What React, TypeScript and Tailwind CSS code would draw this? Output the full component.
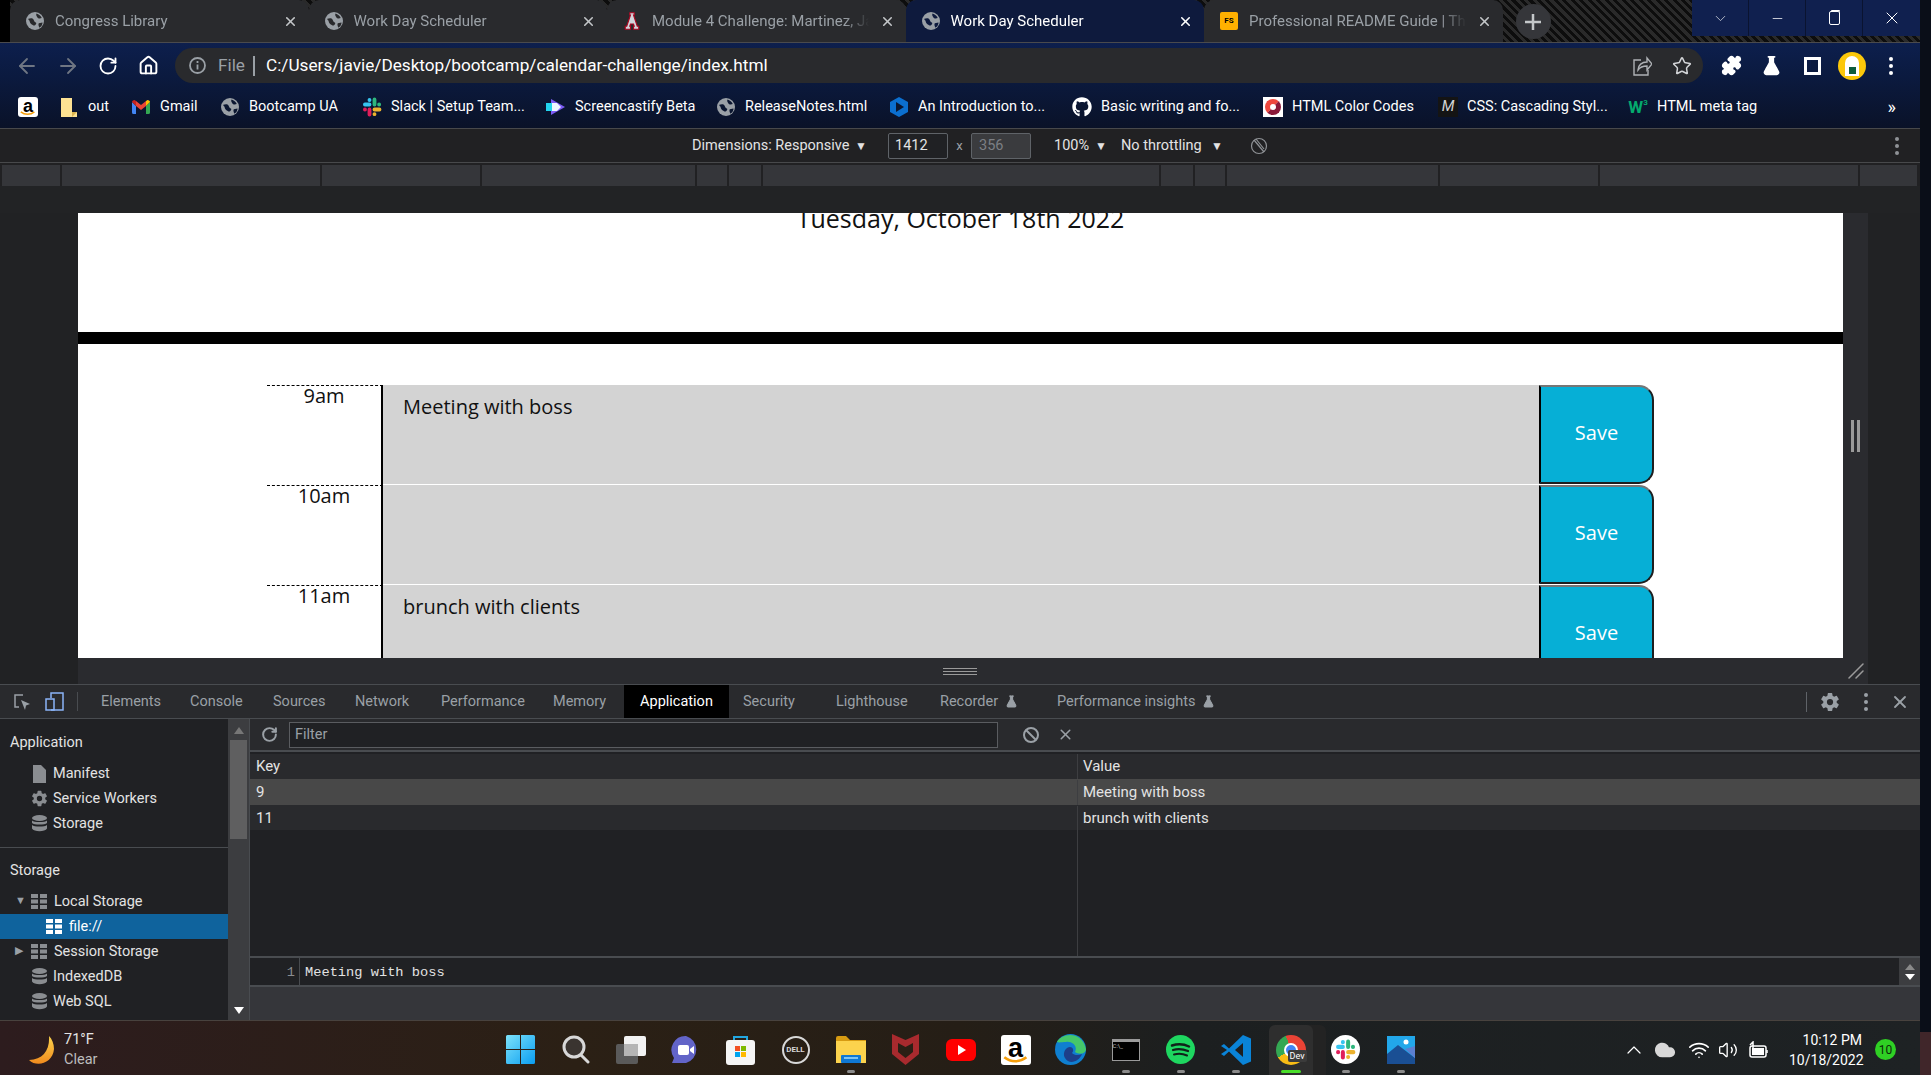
import { ArrowLeft, ArrowRight, ChevronDown, ChevronUp, Cloud, FlaskConical, House, Minus, Puzzle, RotateCw, Star, Volume2, Wifi, X } from "lucide-react";
import { FaGithub } from "react-icons/fa";
import { IoSettingsSharp } from "react-icons/io5";

function Globe({ cut = "#292a2d", size = 18 }: { cut?: string; size?: number }) {
  return (
    <svg width={size} height={size} viewBox="0 0 24 24" className="shrink-0">
      <circle cx="12" cy="12" r="12" fill="#9aa0a6" />
      <path d="M3 9c3-1 6-1 7 1s1 3 3 4-1 5-3 4-5-3-5-5-2-2-2-4z" fill={cut} />
      <path d="M14 2c3 1 6 3 7 6-2 1-5 1-6-1s-2-3-1-5z" fill={cut} />
      <path d="M17 15l5-1c0 2-1 5-4 7-1-2-2-4-1-6z" fill={cut} />
    </svg>
  );
}

function AmazonTile({ size = 20 }: { size?: number }) {
  return (
    <div
      className="relative flex shrink-0 items-start justify-center rounded-[3px] bg-white font-['Liberation_Sans',sans-serif] font-bold leading-none text-black"
      style={{ width: size, height: size, fontSize: size * 0.9 }}
    >
      a
      <svg viewBox="0 0 20 6" className="absolute bottom-[1px] left-[2px] right-[2px]">
        <path d="M1 1c5 4 12 4 17 0" stroke="#f59e0b" strokeWidth="2" fill="none" />
      </svg>
    </div>
  );
}

function SlackGlyph({ size = 20 }: { size?: number }) {
  return (
    <svg width={size} height={size} viewBox="0 0 24 24" fill="none" strokeWidth="4.6" strokeLinecap="round" className="shrink-0">
      <path d="M9 3.5v.1M3.5 9H9" stroke="#36c5f0" />
      <path d="M15 3v6M20.5 9h.1" stroke="#2eb67d" />
      <path d="M21 15h-6M15 20.5v.1" stroke="#ecb22e" />
      <path d="M9 21v-6M3.5 15h.1" stroke="#e01e5a" />
    </svg>
  );
}

const ruler = ["w-[58px]", "w-[258px]", "w-[158px]", "w-[213px]", "w-[30px]", "w-[32px]", "w-[396px]", "w-[32px]", "w-[30px]", "w-[211px]", "w-[158px]", "w-[258px]", "w-[57px]"];

const tabs = [
  { title: "Congress Library", icon: <Globe /> },
  { title: "Work Day Scheduler", icon: <Globe /> },
  {
    title: "Module 4 Challenge: Martinez, Ja",
    icon: (
      <svg width="18" height="18" viewBox="0 0 24 24" className="shrink-0">
        <path d="M9 1h6v3h-1l5 15h2v4h-7v-4h1l-1-3H10l-1 3h1v4H3v-4h2L10 4H9z" fill="#d1d5db" stroke="#ab0520" strokeWidth="1.5" />
      </svg>
    ),
  },
  { title: "Work Day Scheduler", icon: <Globe cut="#0e1a3d" />, active: true },
  {
    title: "Professional README Guide | The",
    icon: (
      <div className="flex h-[18px] w-[18px] shrink-0 items-center justify-center rounded-[2px] bg-[#ffb000] text-[8px] font-bold leading-none text-black">
        FS
      </div>
    ),
  },
];

const bookmarks = [
  { label: "", width: "w-[41px]", icon: <AmazonTile /> },
  {
    label: "out",
    width: "w-[72px]",
    icon: (
      <svg width="16" height="20" viewBox="0 0 16 20">
        <path d="M0 1h11v14h5v5H0z" fill="#fde293" />
        <path d="M11 15h5l-5 5z" fill="#d9b34f" />
      </svg>
    ),
  },
  {
    label: "Gmail",
    width: "w-[89px]",
    icon: (
      <svg width="18" height="14" viewBox="0 0 18 14">
        <path d="M0 2v10.5A1.5 1.5 0 0 0 1.5 14H4V6z" fill="#4285f4" />
        <path d="M18 2v10.5a1.5 1.5 0 0 1-1.5 1.5H14V6z" fill="#34a853" />
        <path d="M0 2l4 4V1L2.5 0C1 0 0 1 0 2z" fill="#c5221f" />
        <path d="M4 1v5l5 4 5-4V1L9 5z" fill="#ea4335" />
        <path d="M14 1v5l4-4c0-1-1-2-2.5-2z" fill="#fbbc04" />
      </svg>
    ),
  },
  { label: "Bootcamp UA", width: "w-[142px]", icon: <Globe cut="#0b1630" /> },
  { label: "Slack | Setup Team...", width: "w-[184px]", icon: <SlackGlyph /> },
  {
    label: "Screencastify Beta",
    width: "w-[170px]",
    icon: (
      <svg width="20" height="20" viewBox="0 0 20 20">
        <path d="M5 2l14 8-14 8z" fill="#7c5cf5" />
        <rect x="0" y="6" width="6" height="8" fill="#22d3ee" />
        <path d="M6 6h5l4 4-4 4H6z" fill="#eff6ff" />
      </svg>
    ),
  },
  { label: "ReleaseNotes.html", width: "w-[173px]", icon: <Globe cut="#0b1630" /> },
  {
    label: "An Introduction to...",
    width: "w-[183px]",
    icon: (
      <svg width="18" height="20" viewBox="0 0 18 20">
        <path d="M9 0l9 5v10l-9 5-9-5V5z" fill="#0b6fd0" />
        <path d="M6 5l8 5-8 5z" fill="#0b1630" />
      </svg>
    ),
  },
  { label: "Basic writing and fo...", width: "w-[191px]", icon: <FaGithub className="text-[20px] text-white" /> },
  {
    label: "HTML Color Codes",
    width: "w-[175px]",
    icon: (
      <div className="flex h-5 w-5 items-center justify-center bg-white">
        <div className="h-4 w-4 rounded-full border-[5px] border-[#f0483e] border-b-[#8b1a3a] border-r-[#8b1a3a] bg-white" />
      </div>
    ),
  },
  {
    label: "CSS: Cascading Styl...",
    width: "w-[190px]",
    icon: <div className="flex h-5 w-5 items-center justify-center bg-[#141414] text-[15px] italic leading-none text-[#d4d4d4]">M</div>,
  },
  {
    label: "HTML meta tag",
    width: "w-[140px]",
    icon: (
      <div className="flex h-5 w-5 items-start justify-center text-[17px] font-bold leading-[20px] text-[#04aa6d]">
        W<span className="text-[8px] leading-[12px]">3</span>
      </div>
    ),
  },
];

const devtoolsTabs = [
  { name: "Elements", width: "w-[89px]" },
  { name: "Console", width: "w-[83px]" },
  { name: "Sources", width: "w-[82px]" },
  { name: "Network", width: "w-[86px]" },
  { name: "Performance", width: "w-[112px]" },
  { name: "Memory", width: "w-[71px]" },
];

function FlaskMark() {
  return <FlaskConical size={13} className="fill-[#9aa0a6] text-[#9aa0a6]" />;
}

function DbIcon() {
  return (
    <svg width="15" height="17" viewBox="0 0 15 17" className="shrink-0">
      <ellipse cx="7.5" cy="3" rx="7.5" ry="3" fill="#8a8d91" />
      <path d="M0 5.5c2 2 13 2 15 0V8c-2 2-13 2-15 0zM0 10c2 2 13 2 15 0v3.5c-2 3.5-13 3.5-15 0z" fill="#8a8d91" />
    </svg>
  );
}

function GridIcon({ color = "#8a8d91" }: { color?: string }) {
  return (
    <svg width="16" height="15" viewBox="0 0 16 15" className="shrink-0" fill={color}>
      <rect x="0" y="0" width="7" height="4" />
      <rect x="9" y="0" width="7" height="4" />
      <rect x="0" y="5.5" width="7" height="4" />
      <rect x="9" y="5.5" width="7" height="4" />
      <rect x="0" y="11" width="7" height="4" />
      <rect x="9" y="11" width="7" height="4" />
    </svg>
  );
}

function SideRow({ icon, label }: { icon: React.ReactNode; label: string }) {
  return (
    <div className="flex h-[25px] items-center pl-[26px]">
      <div className="flex w-[27px] shrink-0 justify-center">{icon}</div>
      <span>{label}</span>
    </div>
  );
}

function TreeRow({ arrow, label }: { arrow: string; label: string }) {
  return (
    <div className="flex h-[25px] items-center pl-[15px]">
      <span className="w-[15px] text-[11px] text-[#9aa0a6]">{arrow}</span>
      <div className="mr-[6px] flex w-[18px] shrink-0 justify-center">
        <GridIcon />
      </div>
      <span>{label}</span>
    </div>
  );
}

function Kebab({ color = "bg-white" }: { color?: string }) {
  return (
    <div className="flex flex-col gap-[3px]">
      <div className={`h-1 w-1 rounded-full ${color}`} />
      <div className={`h-1 w-1 rounded-full ${color}`} />
      <div className={`h-1 w-1 rounded-full ${color}`} />
    </div>
  );
}

function Corner() {
  return (
    <svg width="16" height="16" viewBox="0 0 16 16" stroke="#9a9a9a" strokeWidth="1.5" strokeLinecap="round">
      <path d="M1 15L15 1M8 15l7-7" />
    </svg>
  );
}

const hours = [
  { label: "9am", text: "Meeting with boss" },
  { label: "10am", text: "" },
  { label: "11am", text: "brunch with clients" },
];

const dock = [
  {
    key: "start",
    icon: (
      <svg width="29" height="29" viewBox="0 0 29 29">
        <defs>
          <linearGradient id="win" x1="0" y1="0" x2="1" y2="1">
            <stop offset="0" stopColor="#7de3fb" />
            <stop offset="1" stopColor="#0a9df0" />
          </linearGradient>
        </defs>
        <path d="M0 1.5A1.5 1.5 0 0 1 1.5 0H14v14H0zM15 0h12.5A1.5 1.5 0 0 1 29 1.5V14H15zM0 15h14v14H1.5A1.5 1.5 0 0 1 0 27.5zM15 15h14v12.5a1.5 1.5 0 0 1-1.5 1.5H15z" fill="url(#win)" />
      </svg>
    ),
  },
  {
    key: "search",
    icon: (
      <svg width="28" height="29" viewBox="0 0 28 29" fill="none">
        <circle cx="12" cy="12" r="10" fill="#3a3430" stroke="#d8d8d8" strokeWidth="3" />
        <path d="M19 20l7 7" stroke="#d8d8d8" strokeWidth="3" strokeLinecap="round" />
      </svg>
    ),
  },
  {
    key: "tasks",
    icon: (
      <svg width="30" height="28" viewBox="0 0 30 28">
        <rect x="0" y="8" width="22" height="20" rx="2" fill="#5a5a5a" />
        <rect x="8" y="0" width="22" height="20" rx="2" fill="#f2f2f2" />
        <rect x="8" y="8" width="14" height="12" fill="#b5b5b5" />
      </svg>
    ),
  },
  {
    key: "chat",
    icon: (
      <svg width="29" height="29" viewBox="0 0 29 29">
        <path d="M15 1a14 14 0 0 1 0 27H1l2-5A14 14 0 0 1 15 1z" fill="#6264c8" />
        <rect x="7" y="10" width="11" height="10" rx="2" fill="#fff" />
        <path d="M19 14l4-3v8l-4-3z" fill="#fff" />
      </svg>
    ),
  },
  {
    key: "store",
    icon: (
      <svg width="29" height="30" viewBox="0 0 29 30">
        <path d="M8 6V2h13v4" stroke="#22a7e0" strokeWidth="2" fill="none" />
        <rect x="0" y="5" width="29" height="25" rx="3" fill="#f5f5f5" />
        <rect x="9" y="11" width="5" height="5" fill="#f25022" />
        <rect x="15" y="11" width="5" height="5" fill="#7fba00" />
        <rect x="9" y="17" width="5" height="5" fill="#00a4ef" />
        <rect x="15" y="17" width="5" height="5" fill="#ffb900" />
      </svg>
    ),
  },
  {
    key: "dell",
    icon: (
      <div className="flex h-7 w-7 items-center justify-center rounded-full border-2 border-[#d8d8d8] text-[8px] font-bold leading-none text-[#d8d8d8]">
        DELL
      </div>
    ),
  },
  {
    key: "files",
    dot: true,
    icon: (
      <svg width="30" height="27" viewBox="0 0 30 27">
        <path d="M0 2a2 2 0 0 1 2-2h8l4 4h16v4H0z" fill="#d79b12" />
        <rect x="0" y="5" width="30" height="22" fill="#fcd34d" />
        <rect x="5" y="19" width="20" height="8" rx="1" fill="#0f78d4" />
        <rect x="8" y="21" width="14" height="2" fill="#7cc4f5" />
      </svg>
    ),
  },
  {
    key: "mcafee",
    icon: (
      <svg width="27" height="31" viewBox="0 0 27 31">
        <path d="M0 0l13.5 6L27 0v20L13.5 31 0 20z" fill="#a82a2e" />
        <path d="M6 9l7.5 4L21 9v9l-7.5 6L6 18z" fill="#2a1f15" />
      </svg>
    ),
  },
  {
    key: "youtube",
    icon: (
      <svg width="30" height="22" viewBox="0 0 30 22">
        <rect width="30" height="22" rx="6" fill="#ff0000" />
        <path d="M12 6l8 5-8 5z" fill="#fff" />
      </svg>
    ),
  },
  { key: "amazon", icon: <AmazonTile size={30} /> },
  {
    key: "edge",
    icon: (
      <svg width="31" height="31" viewBox="0 0 31 31">
        <circle cx="15.5" cy="15.5" r="15.5" fill="#0f7fd0" />
        <path d="M2 8C6-1 27-4 31 15c0 5-7 6-11 3 3-6-3-11-9-10-4 0-7 1-9 0z" fill="#45c76a" />
        <path d="M12 14c5-3 8 2 5 5 3 3 7 2 10 1-3 8-13 11-17 4-2-3-1-8 2-10z" fill="#1d3f8a" />
      </svg>
    ),
  },
  {
    key: "terminal",
    dot: true,
    icon: <div className="h-[22px] w-7 border border-t-[3px] border-[#9a9a9a] bg-black text-[6px] leading-[8px] text-[#c8c8c8]">C:\_</div>,
  },
  {
    key: "spotify",
    dot: true,
    icon: (
      <svg width="29" height="29" viewBox="0 0 29 29" fill="none" stroke="#10231a" strokeLinecap="round">
        <circle cx="14.5" cy="14.5" r="14.5" fill="#1ed760" stroke="none" />
        <path d="M6 10.5c6-2 12-1.5 17 1" strokeWidth="2.5" />
        <path d="M7 15c5-1.5 10-1 15 1" strokeWidth="2.2" />
        <path d="M8 19.5c4-1 9-.8 13 1" strokeWidth="2" />
      </svg>
    ),
  },
  {
    key: "vscode",
    dot: true,
    icon: (
      <svg width="30" height="30" viewBox="0 0 30 30">
        <path d="M22 0l8 3.5v23L22 30 8 16.5 3 21l-3-2 6-4-6-4 3-2 5 4.5z" fill="#0a84d8" />
        <path d="M22 8l-8 7 8 7z" fill="#1f1f1f" />
      </svg>
    ),
  },
  {
    key: "chrome",
    active: true,
    icon: (
      <div className="relative h-[30px] w-[30px]">
        <div className="h-[30px] w-[30px] rounded-full bg-[conic-gradient(#ea4335_0deg_130deg,#f9bc15_130deg_240deg,#34a853_240deg_340deg,#ea4335_340deg)]">
          <div className="relative left-[8px] top-[8px] h-[14px] w-[14px] rounded-full border-2 border-white bg-[#4285f4]" />
        </div>
        <div className="absolute -right-[1px] bottom-[3px] rounded-[2px] bg-[#3b3b3b] px-[2px] text-[9px] leading-[12px] text-white">Dev</div>
      </div>
    ),
  },
  {
    key: "slack",
    dot: true,
    icon: (
      <div className="flex h-[29px] w-[29px] items-center justify-center rounded-full bg-white">
        <SlackGlyph size={21} />
      </div>
    ),
  },
  {
    key: "photos",
    dot: true,
    icon: (
      <svg width="28" height="28" viewBox="0 0 28 28">
        <rect width="28" height="28" fill="#22a7ea" />
        <circle cx="19" cy="6" r="2.5" fill="#fff" />
        <path d="M0 28V18l11-9 17 13v6z" fill="#1a4f94" />
        <path d="M18 13l10-3v12z" fill="#5b7fd0" />
      </svg>
    ),
  },
];

export default function App() {
  return (
    <div className="flex h-[1075px] w-[1931px] overflow-hidden bg-[#0a0e18] font-['Roboto',sans-serif] text-[14.5px] text-[#e8eaed]">
      <div className="flex w-[1920px] shrink-0 flex-col">
        {/* tab strip */}
        <div className="flex h-[42px] bg-[#1c1c1c] bg-[repeating-linear-gradient(45deg,#0d0d0d_0px,#0d0d0d_3px,#2a2a2a_3px,#2a2a2a_6px)]">
          <div className="w-[10px] bg-black" />
          {tabs.map((tab, i) => (
            <div
              key={i}
              className={`flex h-[42px] w-[298.5px] shrink-0 items-center rounded-t-[10px] pl-[16px] pr-[11px] text-[15px] ${tab.active ? "bg-[#0e1a3d] text-white" : "bg-[#292a2d] text-[#9aa0a6]"}`}
            >
              {tab.icon}
              <span className="ml-[11px] min-w-0 flex-1 overflow-hidden whitespace-nowrap [mask-image:linear-gradient(90deg,#000_86%,transparent_97%)]">{tab.title}</span>
              <X size={15} strokeWidth={2.5} className={`ml-1 shrink-0 ${tab.active ? "text-white" : "text-[#c4c7c9]"}`} />
            </div>
          ))}
          <div className="ml-[13px] mt-[4px] flex h-[35px] w-[35px] items-center justify-center rounded-full bg-[#35363a]">
            <svg width="18" height="18" viewBox="0 0 18 18" stroke="#c4c7c9" strokeWidth="2.5">
              <path d="M9 1v16M1 9h16" />
            </svg>
          </div>
          <div className="ml-auto flex h-[36px]">
            <div className="flex w-[57px] items-center justify-center border-r border-[#0a1330] bg-[#10204f]">
              <ChevronDown size={17} strokeWidth={1.2} className="text-[#c8ccd8]" />
            </div>
            <div className="flex w-[57px] items-center justify-center border-r border-[#0a1330] bg-[#10204f]">
              <Minus size={15} strokeWidth={1.2} className="text-white" />
            </div>
            <div className="flex w-[57px] items-center justify-center border-r border-[#0a1330] bg-[#10204f]">
              <div className="h-[14px] w-[11px] rounded-[2px] border border-white shadow-[1px_-2px_0_-1px_#ffffff]" />
            </div>
            <div className="flex w-[57px] items-center justify-center bg-[#10204f]">
              <X size={20} strokeWidth={1.2} className="text-white" />
            </div>
          </div>
        </div>

        {/* toolbar + bookmarks */}
        <div className="border-t border-[#4a4a4d] bg-[linear-gradient(180deg,#0d1f4d_0%,#0b1a3f_40%,#0a1228_100%)]">
          <div className="flex h-[42px] items-center pt-[3px]">
            <div className="flex w-[175px] shrink-0 items-center pl-[15px]">
              <ArrowLeft size={24} strokeWidth={1.8} className="text-[#6f7683]" />
              <ArrowRight size={24} strokeWidth={1.8} className="ml-[17px] text-[#6f7683]" />
              <RotateCw size={20} strokeWidth={2.2} className="ml-[18px] text-white" />
              <House size={21} strokeWidth={2.2} className="ml-[20px] text-white" />
            </div>
            <div className="flex h-[35px] w-[1528px] shrink-0 items-center rounded-full bg-[#292a2d] pl-[14px] pr-[11px] text-[17.2px]">
              <svg width="17" height="17" viewBox="0 0 17 17" fill="none" className="shrink-0">
                <circle cx="8.5" cy="8.5" r="7.5" stroke="#9aa0a6" strokeWidth="1.8" />
                <path d="M8.5 7.5v5M8.5 4v2" stroke="#9aa0a6" strokeWidth="1.8" />
              </svg>
              <span className="ml-[12px] text-[#9aa0a6]">File</span>
              <div className="ml-[8px] h-[20px] w-[2px] bg-[#9aa0a6]" />
              <span className="ml-[11px] text-white">C:/Users/javie/Desktop/bootcamp/calendar-challenge/index.html</span>
              <svg width="20" height="20" viewBox="0 0 20 20" fill="none" stroke="#aeb1b5" strokeWidth="1.4" className="ml-auto">
                <path d="M9 4H2v15h14v-5" />
                <path d="M6 14c0-5 4-8 9-8V2l5 6-5 6v-4c-4 0-7 1-9 4z" />
              </svg>
              <Star size={20} strokeWidth={1.8} className="ml-[20px] text-[#d3d5d8]" />
            </div>
            <Puzzle size={21} className="ml-[18px] fill-white text-white" />
            <FlaskConical size={21} className="ml-[19px] fill-white text-white" />
            <div className="ml-[22px] flex h-[18px] w-[17px] justify-end border-[3px] border-white">
              <div className="w-[7px] bg-[#0b1a3f]" />
            </div>
            <div className="relative ml-[17px] flex h-[28px] w-[28px] items-center justify-center rounded-full bg-[#fcc80a]">
              <div className="flex h-[20px] w-[14px] items-end justify-center rounded-t-full bg-white pb-[2px]">
                <div className="h-[7px] w-[7px] bg-[#0d5c3d]" />
              </div>
            </div>
            <div className="ml-[23px]">
              <Kebab />
            </div>
          </div>
          <div className="flex h-[43px] items-center pl-[18px]">
            {bookmarks.map((b, i) => (
              <div key={i} className={`flex shrink-0 items-center ${b.width}`}>
                <div className="flex w-[20px] shrink-0 justify-center">{b.icon}</div>
                {b.label && <span className="ml-[9px] whitespace-nowrap text-white">{b.label}</span>}
              </div>
            ))}
            <span className="ml-auto pr-[24px] text-[18px] text-white">»</span>
          </div>
        </div>

        {/* device toolbar */}
        <div className="flex h-[35px] items-center border-y border-[#48494b] bg-[#212123] pl-[692px] text-[#e3e3e3]">
          <span className="w-[163px]">Dimensions: Responsive</span>
          <span className="w-[12px] text-center text-[12px]">▼</span>
          <div className="ml-[21px] flex h-[26px] w-[60px] items-center rounded-[2px] border border-[#5f6368] bg-[#202124] pl-[6px]">1412</div>
          <span className="w-[23px] text-center text-[13px] text-[#9aa0a6]">x</span>
          <div className="flex h-[26px] w-[60px] items-center rounded-[2px] border border-[#5f6368] bg-[#3a3b3e] pl-[7px] text-[#7c7f84]">356</div>
          <span className="ml-[23px] w-[41px]">100%</span>
          <span className="w-[12px] text-center text-[12px]">▼</span>
          <span className="ml-[14px] w-[90px]">No throttling</span>
          <span className="w-[12px] text-center text-[12px]">▼</span>
          <svg width="18" height="18" viewBox="0 0 18 18" fill="none" stroke="#8f9296" strokeWidth="1.2" className="ml-[27px]">
            <circle cx="9" cy="9" r="7.5" />
            <path d="M4 3l10 12M6 2l8 10" />
          </svg>
          <div className="ml-auto pr-[21px]">
            <Kebab color="bg-[#8f9296]" />
          </div>
        </div>

        {/* media query ruler */}
        <div className="flex h-[23px] gap-[2px] bg-[#212123] pl-[2px] pt-[2px]">
          {ruler.map((w, i) => (
            <div key={i} className={`h-[21px] bg-[#35363a] ${w}`} />
          ))}
        </div>

        {/* emulated page */}
        <div className="h-[27px] shrink-0 bg-[#222325]" />
        <div className="flex h-[445px] shrink-0 bg-[#212224]">
          <div className="w-[78px] shrink-0" />
          <div className="w-[1765px] shrink-0 overflow-hidden bg-white font-['Open_Sans',sans-serif] text-[20px] text-[#111111]">
            <div className="h-[119px] overflow-hidden">
              <p className="-mt-[13px] text-center text-[25px] leading-[36px]">Tuesday, October 18th 2022</p>
            </div>
            <div className="h-[12px] bg-black" />
            <div className="flex flex-col pl-[189px] pt-[41px]">
              {hours.map((h) => (
                <div key={h.label} className="flex h-[100px] shrink-0">
                  <div className="w-[116px] shrink-0 border-r-2 border-t border-r-black border-t-black text-center leading-[20px] [border-top-style:dashed]">
                    {h.label}
                  </div>
                  <div className="w-[1156px] shrink-0 border-b border-white bg-[#d3d3d3] pl-[20px] pt-[8px] leading-[27px]">{h.text}</div>
                  <div className="flex h-[99px] w-[115px] shrink-0 items-center justify-center rounded-r-[15px] border-2 border-b-[#1e1e1e] border-l-black border-r-[#1e1e1e] border-t-[#767676] bg-[#06afd6] pb-[3px] text-white">
                    Save
                  </div>
                </div>
              ))}
            </div>
          </div>
          <div className="flex w-[25px] shrink-0 items-center justify-center gap-[3px] bg-[#2a2b2f]">
            <div className="h-[32px] w-[3px] bg-[#9a9a9a]" />
            <div className="h-[32px] w-[3px] bg-[#9a9a9a]" />
          </div>
        </div>
        <div className="flex h-[26px] shrink-0 bg-[#212224]">
          <div className="w-[78px] shrink-0" />
          <div className="flex w-[1790px] shrink-0 items-center bg-[#2a2b2f] pr-[4px]">
            <div className="ml-[865px] flex w-[34px] flex-col gap-[2px]">
              <div className="h-[1px] bg-[#9a9a9a]" />
              <div className="h-[1px] bg-[#9a9a9a]" />
              <div className="h-[1px] bg-[#9a9a9a]" />
            </div>
            <div className="ml-auto">
              <Corner />
            </div>
          </div>
        </div>

        {/* devtools */}
        <div className="flex h-[35px] shrink-0 items-center border-y border-[#494c50] bg-[#292a2d] text-[#9aa0a6]">
          <div className="flex w-[78px] shrink-0 items-center border-r border-[#494c50] pl-[13px]">
            <svg width="18" height="18" viewBox="0 0 18 18" fill="none">
              <path d="M10 2H2v12h4" stroke="#9aa0a6" strokeWidth="1.5" />
              <path d="M8 7l9 4-4 1.5L12 17z" fill="#9aa0a6" />
            </svg>
            <svg width="19" height="19" viewBox="0 0 19 19" fill="none" stroke="#8ab4f8" strokeWidth="1.5" className="ml-[14px]">
              <path d="M6 6V1h12v17H6" />
              <rect x="1" y="7" width="8" height="11" />
            </svg>
          </div>
          <div className="flex pl-[23px]">
            {devtoolsTabs.map((t) => (
              <span key={t.name} className={`shrink-0 ${t.width}`}>
                {t.name}
              </span>
            ))}
          </div>
          <div className="flex h-[33px] w-[105px] shrink-0 items-center justify-center bg-black text-white">Application</div>
          <span className="ml-[14px] w-[93px] shrink-0">Security</span>
          <span className="w-[104px] shrink-0">Lighthouse</span>
          <span className="flex w-[117px] shrink-0 items-center gap-[7px]">
            Recorder <FlaskMark />
          </span>
          <span className="flex items-center gap-[7px]">
            Performance insights <FlaskMark />
          </span>
          <div className="ml-auto flex items-center">
            <div className="h-[20px] w-[1px] bg-[#5f6368]" />
            <IoSettingsSharp className="ml-[13px] text-[20px] text-[#9aa0a6]" />
            <div className="ml-[24px]">
              <Kebab color="bg-[#9aa0a6]" />
            </div>
            <X size={20} strokeWidth={2.2} className="ml-[22px] mr-[10px] text-[#9aa0a6]" />
          </div>
        </div>

        <div className="flex h-[301px] shrink-0 bg-[#202124]">
          {/* sidebar */}
          <div className="w-[228px] shrink-0 overflow-hidden text-[#e3e3e3]">
            <div className="pl-[10px] pt-[12px] leading-[24px]">Application</div>
            <div className="pt-[6px]">
              <SideRow
                label="Manifest"
                icon={
                  <svg width="13" height="18" viewBox="0 0 13 18">
                    <path d="M0 0h8l5 5v13H0z" fill="#8a8d91" />
                  </svg>
                }
              />
              <SideRow label="Service Workers" icon={<IoSettingsSharp className="text-[17px] text-[#8a8d91]" />} />
              <SideRow label="Storage" icon={<DbIcon />} />
            </div>
            <div className="mt-[11px] border-t border-[#494c50] pl-[10px] pt-[11px] leading-[24px]">Storage</div>
            <div className="pt-[6px]">
              <TreeRow arrow="▼" label="Local Storage" />
              <div className="flex h-[25px] items-center bg-[#0f639d] pl-[46px] text-white">
                <GridIcon color="#ffffff" />
                <span className="ml-[7px]">file://</span>
              </div>
              <TreeRow arrow="▶" label="Session Storage" />
              <SideRow label="IndexedDB" icon={<DbIcon />} />
              <SideRow label="Web SQL" icon={<DbIcon />} />
            </div>
          </div>

          {/* sidebar scrollbar */}
          <div className="flex w-[22px] shrink-0 flex-col items-center border-r border-[#494c50] bg-[#3c3d40] pt-[8px]">
            <div className="h-0 w-0 border-x-[5px] border-b-[7px] border-x-transparent border-b-[#777]" />
            <div className="mt-[6px] h-[99px] w-[17px] bg-[#5f5f60]" />
            <div className="mb-[6px] mt-auto h-0 w-0 border-x-[5px] border-t-[7px] border-x-transparent border-t-white" />
          </div>

          {/* storage view */}
          <div className="flex min-w-0 flex-1 flex-col text-[15px] text-[#e3e3e3]">
            <div className="flex h-[33px] shrink-0 items-center border-b-2 border-[#494c50] bg-[#292a2d]">
              <RotateCw size={17} strokeWidth={2.8} className="ml-[11px] text-[#9aa0a6]" />
              <div className="ml-[11px] flex h-[26px] w-[709px] items-center border border-[#5a5c60] bg-[#202124] pl-[5px] text-[14.5px] text-[#9aa0a6]">Filter</div>
              <svg width="18" height="18" viewBox="0 0 18 18" fill="none" stroke="#9aa0a6" strokeWidth="2" className="ml-[24px]">
                <circle cx="9" cy="9" r="7" />
                <path d="M4 4l10 10" />
              </svg>
              <X size={17} strokeWidth={2.2} className="ml-[17px] text-[#9aa0a6]" />
            </div>
            <div className="mt-[2px] flex h-[25px] shrink-0 items-center bg-[#292a2d]">
              <div className="w-[828px] shrink-0 border-r border-[#3d3e41] pl-[6px] leading-[25px]">Key</div>
              <div className="pl-[5px]">Value</div>
            </div>
            <div className="flex h-[26px] shrink-0 items-center bg-[#484848] pt-[1px]">
              <div className="w-[828px] shrink-0 border-r border-[#3d3e41] pl-[6px] leading-[25px]">9</div>
              <div className="pl-[5px]">Meeting with boss</div>
            </div>
            <div className="flex h-[25px] shrink-0 items-center bg-[#292a2d] pt-[1px]">
              <div className="w-[828px] shrink-0 border-r border-[#3d3e41] pl-[6px] leading-[24px]">11</div>
              <div className="pl-[5px]">brunch with clients</div>
            </div>
            <div className="flex h-[126px] shrink-0">
              <div className="w-[828px] shrink-0 border-r border-[#3d3e41]" />
            </div>
            <div className="flex h-[31px] shrink-0 items-center border-y-2 border-[#494c50] font-['Liberation_Mono',monospace] text-[13.7px]">
              <div className="flex h-full w-[50px] shrink-0 items-center justify-end border-r border-[#494c50] pr-[4px] pt-[3px] text-[#8a8d91]">1</div>
              <span className="ml-[5px] pt-[3px]">Meeting with boss</span>
              <div className="ml-auto flex h-full w-[21px] flex-col items-center justify-center gap-[4px] bg-[#3c3d40]">
                <div className="h-0 w-0 border-x-[5px] border-b-[6px] border-x-transparent border-b-[#8a8a8a]" />
                <div className="h-0 w-0 border-x-[5px] border-t-[6px] border-x-transparent border-t-white" />
              </div>
            </div>
            <div className="min-h-0 flex-1 bg-[#35363a]" />
          </div>
        </div>

        {/* taskbar */}
        <div className="flex min-h-0 flex-1 border-t border-[#48423e] bg-[linear-gradient(90deg,#2d1c1e_0%,#2b2015_30%,#251e16_50%,#1c1f20_62%,#1e2224_100%)]">
          <div className="flex w-[493px] shrink-0 items-center pl-[26px] pt-[3px]">
            <svg width="30" height="32" viewBox="0 0 30 32">
              <defs>
                <linearGradient id="moon" x1="0" y1="0" x2="0" y2="1">
                  <stop offset="0" stopColor="#fbd34d" />
                  <stop offset="1" stopColor="#f08a1d" />
                </linearGradient>
              </defs>
              <path d="M23 2c1 14-6 24-20 24 8 8 24 3 25-11 0-5-2-10-5-13z" fill="url(#moon)" />
            </svg>
            <div className="ml-[8px] leading-[20px] text-[#e3e3e3]">
              <div>71°F</div>
              <div className="text-[#bdbdbd]">Clear</div>
            </div>
          </div>
          <div className="flex shrink-0">
            {dock.map((d) => (
              <div key={d.key} className="relative flex h-[54px] w-[55px] items-center justify-center">
                {d.active && (
                  <>
                    <div className="absolute bottom-0 left-[15px] top-[4px] w-[48px] rounded-t-[6px] bg-[#232323]" />
                    <div className="absolute bottom-0 left-[6px] top-[4px] w-[44px] rounded-t-[6px] bg-[#2e2e2e]" />
                    <div className="absolute bottom-[2px] left-[18px] h-[3px] w-[20px] rounded-full bg-[#4ade2a]" />
                  </>
                )}
                {d.dot && <div className="absolute bottom-[2px] left-[24px] h-[3px] w-[8px] rounded-full bg-[#8a8a8a]" />}
                <div className="relative mt-[3px]">{d.icon}</div>
              </div>
            ))}
          </div>
          <div className="flex flex-1 items-center justify-end pr-[24px] pt-[3px] text-white">
            <ChevronUp size={24} strokeWidth={1.2} />
            <Cloud size={22} className="ml-[8px] fill-[#d8d8d8] text-[#d8d8d8]" />
            <Wifi size={22} strokeWidth={1.8} className="ml-[12px]" />
            <Volume2 size={20} strokeWidth={1.6} className="ml-[8px]" />
            <svg width="20" height="18" viewBox="0 0 20 18" fill="none" stroke="#fff" strokeWidth="1.5" className="ml-[11px]">
              <rect x="1" y="5" width="16" height="11" rx="2" fill="#1e2224" />
              <rect x="3" y="7" width="12" height="7" fill="#fff" stroke="none" />
              <path d="M18 9v3" />
              <path d="M4 7V1L1 4" />
            </svg>
            <div className="ml-[20px] w-[73px] text-right text-[14px] leading-[20px]">
              <div>10:12 PM</div>
              <div>10/18/2022</div>
            </div>
            <div className="ml-[13px] flex h-[21px] w-[21px] items-center justify-center rounded-full bg-[#2fd024] text-[12px] text-[#0b2a08]">10</div>
          </div>
        </div>
      </div>

      {/* wallpaper sliver right of the window */}
      <div className="flex w-[11px] shrink-0 flex-col">
        <div className="h-[1032px] bg-[#0a0e18]" />
        <div className="flex-1 bg-[#40262a]" />
      </div>
    </div>
  );
}
